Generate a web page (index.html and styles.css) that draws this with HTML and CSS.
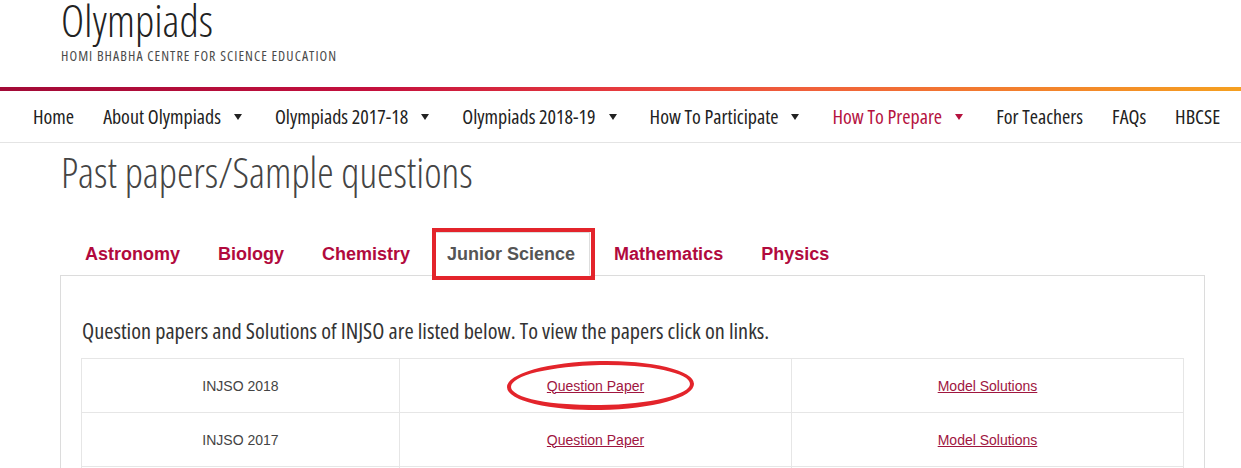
FILE: index.html
```html
<!DOCTYPE html>
<html>
<head>
<meta charset="utf-8">
<title>Olympiads</title>
<link rel="stylesheet" href="styles.css">
</head>
<body>
<header class="site-header">
  <div class="brand">
    <div class="brand-title">Olympiads</div>
    <div class="brand-sub">HOMI BHABHA CENTRE FOR SCIENCE EDUCATION</div>
  </div>
</header>
<div class="grad-bar"></div>
<nav class="main-nav">
  <ul>
    <li class="nav-item">Home</li>
    <li class="nav-item has-sub">About Olympiads<span class="caret"></span></li>
    <li class="nav-item has-sub">Olympiads 2017-18<span class="caret"></span></li>
    <li class="nav-item has-sub">Olympiads 2018-19<span class="caret"></span></li>
    <li class="nav-item has-sub">How To Participate<span class="caret"></span></li>
    <li class="nav-item has-sub active">How To Prepare<span class="caret"></span></li>
    <li class="nav-item">For Teachers</li>
    <li class="nav-item">FAQs</li>
    <li class="nav-item">HBCSE</li>
  </ul>
</nav>
<main class="content">
  <h1 class="page-title">Past papers/Sample questions</h1>
  <ul class="tabs">
    <li class="tab">Astronomy</li>
    <li class="tab">Biology</li>
    <li class="tab">Chemistry</li>
    <li class="tab tab-active">Junior Science<span class="mark-box"></span></li>
    <li class="tab">Mathematics</li>
    <li class="tab">Physics</li>
  </ul>
  <section class="panel">
    <p class="intro">Question papers and Solutions of INJSO are listed below. To view the papers click on links.</p>
    <table class="papers">
      <tr>
        <td class="c1">INJSO 2018</td>
        <td class="c2"><span class="circled"><a href="#">Question Paper</a><span class="mark-ellipse"></span></span></td>
        <td class="c3"><a href="#">Model Solutions</a></td>
      </tr>
      <tr>
        <td class="c1">INJSO 2017</td>
        <td class="c2"><a href="#">Question Paper</a></td>
        <td class="c3"><a href="#">Model Solutions</a></td>
      </tr>
      <tr>
        <td class="c1">INJSO 2016</td>
        <td class="c2"><a href="#">Question Paper</a></td>
        <td class="c3"><a href="#">Model Solutions</a></td>
      </tr>
    </table>
  </section>
</main>
</body>
</html>
```
FILE: styles.css
```css
html, body {
  margin: 0;
  padding: 0;
  background: #fff;
  overflow: hidden;
}
body {
  width: 1241px;
  height: 468px;
  font-family: "Open Sans", "DejaVu Sans", sans-serif;
  color: #333;
}
.site-header {
  height: 87px;
  padding-left: 61px;
  box-sizing: border-box;
}
.brand-title {
  font-family: "Open Sans", sans-serif;
  font-stretch: 75%;
  font-weight: 300;
  font-size: 44px;
  line-height: 40px;
  color: #222;
}
.brand-sub {
  font-family: "Open Sans", sans-serif;
  font-stretch: 75%;
  font-size: 14px;
  letter-spacing: 1.05px;
  color: #4a4a4a;
  margin-top: 6px;
}
.grad-bar {
  height: 4px;
  background: linear-gradient(to right, #a20a37 0%, #c4103d 30%, #e63b3e 50%, #f0603a 65%, #f5a020 100%);
}
.main-nav {
  height: 51px;
  border-bottom: 1px solid #e4e4e4;
}
.main-nav ul {
  list-style: none;
  margin: 0;
  padding: 0 0 0 33px;
  display: flex;
  align-items: center;
  height: 51px;
}
.nav-item {
  font-family: "Open Sans", sans-serif;
  font-stretch: 75%;
  font-size: 20px;
  color: #222;
  margin-right: 29px;
  display: flex;
  align-items: center;
  white-space: nowrap;
}
.nav-item.has-sub {
  margin-right: 33px;
}
.nav-item.active {
  color: #b5123f;
}
.caret {
  display: inline-block;
  width: 0;
  height: 0;
  border-left: 4px solid transparent;
  border-right: 4px solid transparent;
  border-top: 6px solid currentColor;
  margin-left: 13px;
  margin-top: 1px;
}
.content {
  padding-left: 60px;
  width: 1145px;
}
.page-title {
  margin: 0;
  padding: 7px 0 0 1px;
  font-family: "Open Sans", sans-serif;
  font-stretch: 75%;
  font-weight: 300;
  font-size: 41.5px;
  line-height: 44px;
  color: #444;
}
.tabs {
  list-style: none;
  margin: 38px 0 0 0;
  padding: 0 0 0 11px;
  display: flex;
  gap: 10px;
  height: 43px;
  position: relative;
  z-index: 1;
}
.tab {
  font-family: "Liberation Sans", Arial, sans-serif;
  font-weight: bold;
  font-size: 18px;
  color: #b10a3d;
  padding: 0 14px;
  height: 43px;
  line-height: 44px;
  box-sizing: border-box;
  position: relative;
  white-space: nowrap;
}
.tab-active {
  color: #555;
  background: #fff;
  border: 1px solid #ddd;
  border-bottom-color: #fff;
  height: 44px;
  line-height: 43px;
  padding: 0 14px 0 12px;
}
.mark-box {
  position: absolute;
  left: -3px;
  top: -5px;
  right: -6px;
  bottom: -5px;
  border: 4px solid #e3242b;
  pointer-events: none;
}
.panel {
  border: 1px solid #dcdcdc;
  padding: 0 20px;
  height: 200px;
}
.intro {
  margin: 42px 0 0 1px;
  font-family: "Open Sans", sans-serif;
  font-stretch: 75%;
  font-size: 22.3px;
  line-height: 26px;
  color: #333;
}
.papers {
  margin-top: 14px;
  width: 1103px;
  border-collapse: collapse;
  font-family: "Liberation Sans", Arial, sans-serif;
  font-size: 14px;
  color: #444;
}
.papers td {
  border: 1px solid #e6e6e6;
  height: 53px;
  padding: 0;
  text-align: center;
  vertical-align: middle;
}
.papers .c1 { width: 317px; }
.papers .c2 { width: 391px; }
.papers a {
  color: #a0163f;
  text-decoration: underline;
}
.circled {
  position: relative;
  display: inline-block;
}
.mark-ellipse {
  position: absolute;
  left: -40px;
  right: -50px;
  top: -17px;
  bottom: -16px;
  border: 4px solid #e3242b;
  border-bottom-width: 5px;
  border-radius: 50%;
  transform: rotate(-1deg);
  pointer-events: none;
}
```
